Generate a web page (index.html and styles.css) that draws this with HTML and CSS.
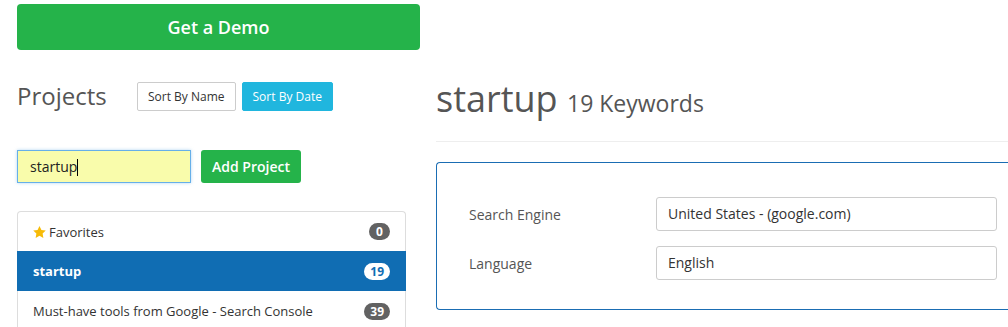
FILE: index.html
```html
<!DOCTYPE html>
<html lang="en">
<head>
    <meta charset="UTF-8">
    <title>Projects</title>
    <link rel="stylesheet" href="styles.css">
</head>
<body>
<div class="page">
    <div class="sidebar">
        <a href="#" class="btn-demo">Get a Demo</a>
        <div class="projects-head">
            <h2 class="projects-title">Projects</h2>
            <span class="btn-sort">Sort By Name</span>
            <span class="btn-sort active">Sort By Date</span>
        </div>
        <div class="add-row">
            <div class="add-input">startup<span class="caret"></span></div>
            <span class="btn-add">Add Project</span>
        </div>
        <ul class="project-list">
            <li>
                <span class="name">
                    <svg class="star" width="13" height="12" viewBox="0 0 24 23"><path d="M12 0l3.7 7.5 8.3 1.2-6 5.8 1.4 8.3L12 18.9l-7.4 3.9L6 14.5 0 8.7l8.3-1.2z" fill="#f7bb07"/></svg>Favorites
                </span>
                <span class="badge">0</span>
            </li>
            <li class="current">
                <span class="name">startup</span>
                <span class="badge">19</span>
            </li>
            <li>
                <span class="name">Must-have tools from Google - Search Console</span>
                <span class="badge">39</span>
            </li>
        </ul>
    </div>
    <div class="main">
        <h1 class="main-title">startup <small>19 Keywords</small></h1>
        <hr class="divider">
        <div class="settings">
            <div class="field">
                <label>Search Engine</label>
                <div class="select">United States - (google.com)</div>
            </div>
            <div class="field">
                <label>Language</label>
                <div class="select">English</div>
            </div>
        </div>
    </div>
</div>
</body>
</html>
```
FILE: styles.css
```css
* {
    margin: 0;
    padding: 0;
    box-sizing: border-box;
}

html, body {
    overflow: hidden;
}

body {
    font-family: "Open Sans", "Liberation Sans", sans-serif;
    color: #333;
    background-color: #fff;
}

ul {
    list-style: none;
}

.page {
    display: flex;
    gap: 16px;
    padding: 4px 0 0 17px;
}

.sidebar {
    width: 403px;
    flex-shrink: 0;
}

.btn-demo {
    display: block;
    height: 46px;
    line-height: 46px;
    text-align: center;
    background-color: #25b34a;
    border-radius: 4px;
    color: #fff;
    font-size: 18px;
    font-weight: 600;
    text-decoration: none;
}

.projects-head {
    display: flex;
    align-items: center;
    gap: 6px;
    margin-top: 32px;
    height: 29px;
}

.projects-title {
    width: 114px;
    font-size: 24px;
    font-weight: 400;
    color: #555;
    line-height: 29px;
    margin-top: -2px;
}

.btn-sort {
    height: 29px;
    line-height: 27px;
    padding: 0 10px;
    border: 1px solid #ccc;
    border-radius: 2px;
    font-size: 12px;
    color: #333;
}

.btn-sort.active {
    background-color: #20b6de;
    border-color: #20b6de;
    color: #fff;
}

.add-row {
    display: flex;
    gap: 10px;
    margin-top: 39px;
}

.add-input {
    width: 174px;
    height: 33px;
    line-height: 31px;
    padding: 0 12px;
    border: 1px solid #66afe9;
    background-color: #f9fcab;
    box-shadow: 0 0 3px rgba(102, 175, 233, 0.5);
    font-size: 14px;
    color: #222;
}

.caret {
    display: inline-block;
    width: 1px;
    height: 17px;
    background-color: #000;
    vertical-align: -4px;
}

.btn-add {
    height: 33px;
    line-height: 33px;
    padding: 0 11px;
    background-color: #25b34a;
    border-radius: 3px;
    color: #fff;
    font-size: 14px;
    font-weight: 600;
}

.project-list {
    width: 389px;
    margin-top: 28px;
    border: 1px solid #ddd;
    border-bottom: none;
    border-radius: 4px 4px 0 0;
}

.project-list li {
    display: flex;
    align-items: center;
    justify-content: space-between;
    height: 39px;
    padding: 0 15px;
    font-size: 13px;
    color: #333;
}

.project-list li + li {
    height: 40px;
}

.project-list li.current {
    background-color: #106db3;
    margin: 0 -1px;
    padding: 0 16px;
    color: #fff;
    font-weight: 700;
}

.star {
    margin-right: 3px;
    vertical-align: -1px;
}

.badge {
    min-width: 21px;
    height: 17px;
    line-height: 17px;
    padding: 0 6px;
    border-radius: 9px;
    background-color: #626262;
    color: #fff;
    font-size: 12px;
    font-weight: 700;
    text-align: center;
}

.current .badge {
    background-color: #fff;
    color: #106db3;
}

.main {
    flex: 1;
}

.main-title {
    margin-top: 75px;
    font-size: 36px;
    font-weight: 400;
    line-height: 40px;
    color: #555;
}

.main-title small {
    font-size: 23px;
    line-height: 1;
    color: #555;
}

.divider {
    border: none;
    border-top: 1px solid #eee;
    margin-top: 22px;
}

/* panel runs on past the right edge of the window */
.settings {
    margin-top: 20px;
    border: 1px solid #1a6db3;
    border-right: none;
    border-radius: 4px 0 0 4px;
    padding: 34px 0 29px 32px;
}

.field {
    display: flex;
    align-items: center;
}

.field + .field {
    margin-top: 15px;
}

.field label {
    width: 187px;
    font-size: 14px;
    color: #555;
}

.select {
    width: 341px;
    height: 34px;
    line-height: 32px;
    padding: 0 11px;
    border: 1px solid #ccc;
    border-radius: 3px;
    font-size: 14px;
    color: #333;
}
```
